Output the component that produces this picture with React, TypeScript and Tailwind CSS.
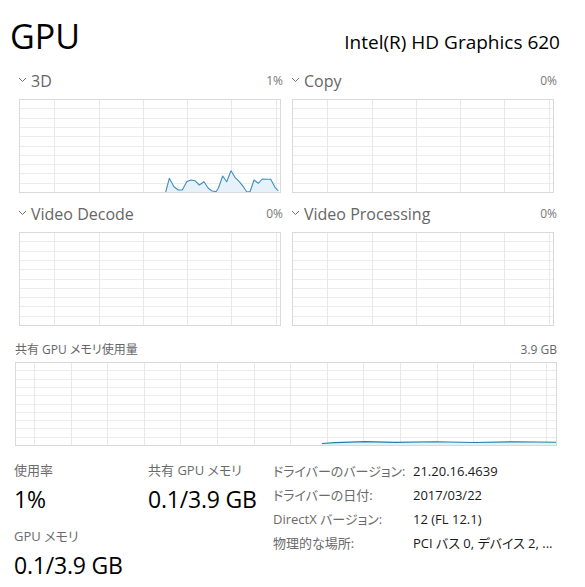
import React from 'react';

const FONT = "font-['Open_Sans','Noto_Sans_CJK_JP',sans-serif]";
const JP = "[font-feature-settings:'palt']";

// vertical grid lines for the small engine charts (px from the left border)
const SMALL_X = [35, 80, 124, 168, 212, 257];
const MEM_X = Array.from({ length: 15 }, (_, i) => 19 + i * 36.6);

const LINE_3D: [number, number][] = [
  [146.7, 93], [150.3, 79.3], [155, 87.7], [159.3, 91], [163.3, 91], [167.7, 82.7], [171.7, 81],
  [176, 81.7], [180.3, 86], [185, 82.7], [189.3, 89.3], [192.7, 91.7], [197, 92.7], [199.3, 89.3],
  [203.7, 77], [207.7, 82.7], [212, 71.7], [216, 78.3], [220.3, 82.7], [224.3, 87.7], [227.7, 92.7],
  [231, 92.7], [235, 81], [239.3, 84.3], [243.3, 80], [247.7, 80.3], [251.7, 80.3], [256, 88.3],
  [259.3, 92],
];

const LINE_MEM: [number, number][] = [
  [307, 81.5], [320, 80.6], [350, 79.6], [380, 80.4], [420, 79.8], [460, 80.5], [500, 79.8], [541, 80.3],
];

const Chevron = () => (
  <svg width="9" height="6" viewBox="0 0 9 6" className="mr-[4px] mt-[-2px]">
    <polyline points="1,1 4.5,4.5 8,1" fill="none" stroke="#707070" strokeWidth="1" />
  </svg>
);

interface ChartProps {
  w: number;
  h: number;
  xs: number[];
  rows: number;
  line?: [number, number][];
  stroke?: string;
  fill?: string;
}

const Chart: React.FC<ChartProps> = ({ w, h, xs, rows, line, stroke, fill }) => {
  const pts = line ? line.map(p => p.join(',')).join(' ') : '';
  const area = line ? `${line[0][0]},${h - 1} ${pts} ${line[line.length - 1][0]},${h - 1}` : '';
  return (
    <svg width={w} height={h} className="block">
      <rect x="0" y="0" width={w} height={h} fill="#ffffff" />
      {Array.from({ length: rows - 1 }, (_, i) => {
        const y = Math.round(((i + 1) * (h - 1)) / rows) + 0.5;
        return <line key={'h' + i} x1="0" x2={w} y1={y} y2={y} stroke="#ececec" />;
      })}
      {xs.map(x => (
        <line key={'v' + x} x1={Math.round(x) + 0.5} x2={Math.round(x) + 0.5} y1="0" y2={h} stroke="#e8e8e8" />
      ))}
      {line && <polygon points={area} fill={fill} />}
      {line && <polyline points={pts} fill="none" stroke={stroke} strokeWidth="1.1" strokeLinejoin="round" />}
      <rect x="0.5" y="0.5" width={w - 1} height={h - 1} fill="none" stroke="#d9d9d9" />
    </svg>
  );
};

const Engine: React.FC<{ name: string; pct: string; line?: [number, number][] }> = ({ name, pct, line }) => (
  <div>
    <div className="flex h-[26px] items-center justify-between pb-[10px]">
      <div className="flex items-center">
        <Chevron />
        <span className="text-[16px] text-[#666666]">{name}</span>
      </div>
      <span className="text-[12px] text-[#777777]">{pct}</span>
    </div>
    <div className="ml-[1px]">
      <Chart w={262} h={94} xs={SMALL_X} rows={10} line={line} stroke="#3d8fc4" fill="#e6f1f9" />
    </div>
  </div>
);

const details = [
  ['ドライバーのバージョン:', '21.20.16.4639'],
  ['ドライバーの日付:', '2017/03/22'],
  ['DirectX バージョン:', '12 (FL 12.1)'],
  ['物理的な場所:', 'PCI バス 0, デバイス 2, ...'],
];

export default function App() {
  return (
    <div className={`${FONT} ${JP} w-[585px] h-[587px] overflow-hidden bg-white text-[#1a1a1a]`}>
      <div className="flex items-baseline justify-between pl-[10px] pr-[25px] pt-[14px]">
        <h1 className="text-[34px] leading-[44px] font-normal text-black">GPU</h1>
        <div className="text-[19px] text-black">Intel(R) HD Graphics 620</div>
      </div>

      <div className="grid grid-cols-[265px_266px] gap-x-[8px] gap-y-[13px] pl-[18px] mt-[15px]">
        <Engine name="3D" pct="1%" line={LINE_3D} />
        <Engine name="Copy" pct="0%" />
        <Engine name="Video Decode" pct="0%" />
        <Engine name="Video Processing" pct="0%" />
      </div>

      <div className="pl-[15px] pr-[28px] mt-[14px]">
        <div className="flex h-[22px] items-center justify-between pb-[2px] text-[12px] text-[#666666]">
          <span>共有 GPU メモリ使用量</span>
          <span>3.9 GB</span>
        </div>
        <Chart w={542} h={84} xs={MEM_X} rows={10} line={LINE_MEM} stroke="#1f80a6" fill="#e2f3f8" />
      </div>

      <div className="flex pl-[14px] mt-[15px]">
        <div className="w-[134px]">
          <div className="text-[13px] leading-[18px] text-[#6b6b6b]">使用率</div>
          <div className="mt-[5px] text-[23px] leading-[30px] tracking-[-0.2px] text-black">1%</div>
          <div className="mt-[13px] text-[13px] leading-[18px] text-[#6b6b6b]">GPU メモリ</div>
          <div className="mt-[5px] text-[23px] leading-[30px] tracking-[-0.2px] text-black">0.1/3.9 GB</div>
        </div>
        <div className="w-[125px]">
          <div className="text-[13px] leading-[18px] text-[#6b6b6b]">共有 GPU メモリ</div>
          <div className="mt-[5px] text-[23px] leading-[30px] tracking-[-0.2px] text-black">0.1/3.9 GB</div>
        </div>
        <div className="-mt-[2px] text-[13px] leading-[24px]">
          {details.map(([k, v]) => (
            <div key={k} className="flex">
              <span className="w-[140px] text-[#6b6b6b]">{k}</span>
              <span className="text-[#1a1a1a]">{v}</span>
            </div>
          ))}
        </div>
      </div>
    </div>
  );
}
